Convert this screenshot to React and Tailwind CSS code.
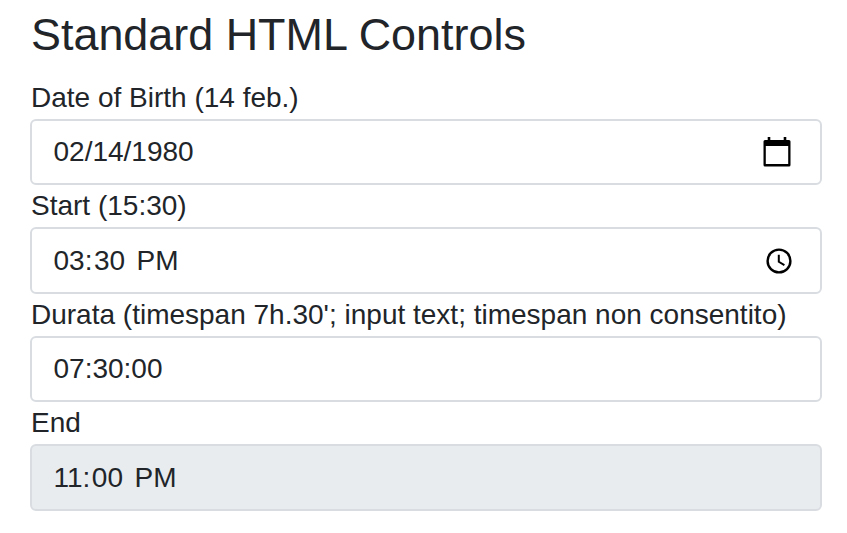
import React from "react";

function CalendarIcon() {
  return (
    <svg className="h-[31px] w-[28px]" viewBox="0 0 28 31" fill="none">
      <path d="M2 3h24a1.5 1.5 0 0 1 1.5 1.5v23.400a1.5 1.5 0 0 1-1.5 1.500H2A1.5 1.5 0 0 1 .5 27.900V4.500A1.500 1.500 0 0 1 2 3ZM2.800 9v17.900h22.400V9Z" fill="#000" fillRule="evenodd" />
      <path d="M4.700 0h2.600v4H4.700zM20.700 0h2.600v4h-2.600z" fill="#000" />
    </svg>
  );
}

function ClockIcon() {
  return (
    <svg className="h-[26px] w-[26px]" viewBox="0 0 26 26" fill="none" stroke="#000">
      <circle cx="13" cy="13" r="11.400" strokeWidth="2.400" />
      <path d="M12.800 6.800v7l5.600 3.300" strokeWidth="2" />
    </svg>
  );
}

function Time({ hour, minute }) {
  return (
    <span className="flex">
      <span>{hour}:</span>
      <span className="ml-[1.500px]">{minute}</span>
      <span className="ml-[11.500px]">PM</span>
    </span>
  );
}

function Field({ label, icon, box, children }) {
  return (
    <div>
      <div className="h-[42px] whitespace-nowrap pl-px leading-[42px]">{label}</div>
      <div className={`flex w-[792px] items-center justify-between rounded-[6px] border-2 border-[#d9dde2] pl-[21.500px] ${box}`}>
        {children}
        {icon}
      </div>
    </div>
  );
}

export default function App() {
  return (
    <main className="h-[533px] w-[847px] overflow-hidden bg-white pl-[30px] font-['Liberation_Sans',Arial,sans-serif] text-[28px] leading-[42px] text-[#212529]">
      <h1 className="h-[77px] pl-px pt-[8px] text-[44.900px] leading-[54px]">Standard HTML Controls</h1>
      <Field label="Date of Birth (14 feb.)" icon={<CalendarIcon />} box="h-[66px] bg-white pr-[29px]">
        <span>02/14/1980</span>
      </Field>
      <Field label="Start (15:30)" icon={<ClockIcon />} box="h-[67px] bg-white pr-[28px]">
        <Time hour="03" minute="30" />
      </Field>
      <Field label="Durata (timespan 7h.30'; input text; timespan non consentito)" box="h-[66px] bg-white">
        <span>07:30:00</span>
      </Field>
      <Field label="End" box="h-[67px] bg-[#e9ecef]">
        <Time hour="11" minute="00" />
      </Field>
    </main>
  );
}
